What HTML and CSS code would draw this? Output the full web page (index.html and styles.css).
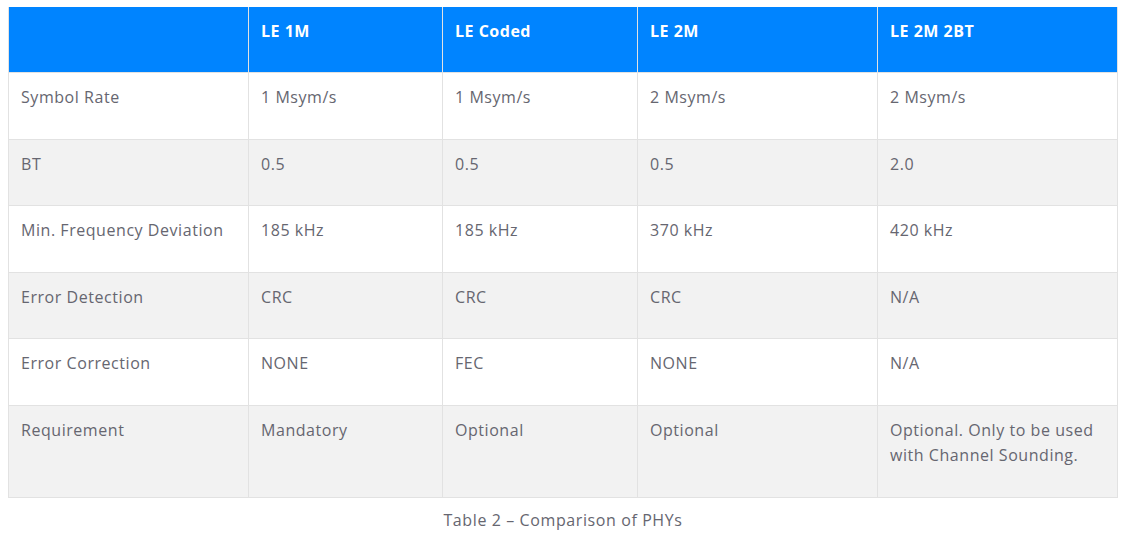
FILE: index.html
```html
<!DOCTYPE html>
<html>
<head>
<meta charset="utf-8">
<link rel="stylesheet" href="styles.css">
</head>
<body>
<figure class="phy-figure">
<table class="phy-table">
<colgroup>
<col class="c-wide"><col class="c-mid"><col class="c-mid2"><col class="c-wide"><col class="c-wide">
</colgroup>
<thead>
<tr><th></th><th>LE 1M</th><th>LE Coded</th><th>LE 2M</th><th>LE 2M 2BT</th></tr>
</thead>
<tbody>
<tr><td>Symbol Rate</td><td>1 Msym/s</td><td>1 Msym/s</td><td>2 Msym/s</td><td>2 Msym/s</td></tr>
<tr class="alt"><td>BT</td><td>0.5</td><td>0.5</td><td>0.5</td><td>2.0</td></tr>
<tr><td>Min. Frequency Deviation</td><td>185 kHz</td><td>185 kHz</td><td>370 kHz</td><td>420 kHz</td></tr>
<tr class="alt"><td>Error Detection</td><td>CRC</td><td>CRC</td><td>CRC</td><td>N/A</td></tr>
<tr><td>Error Correction</td><td>NONE</td><td>FEC</td><td>NONE</td><td>N/A</td></tr>
<tr class="alt"><td>Requirement</td><td>Mandatory</td><td>Optional</td><td>Optional</td><td>Optional. Only to be used with Channel Sounding.</td></tr>
</tbody>
</table>
<figcaption class="phy-caption">Table 2 – Comparison of PHYs</figcaption>
</figure>
</body>
</html>
```
FILE: styles.css
```css
html, body {
  margin: 0;
  padding: 0;
  background: #ffffff;
}
body {
  font-family: "Open Sans", "Liberation Sans", sans-serif;
  color: #666670;
}
.phy-figure {
  margin: 0;
  padding: 7px 13px 0 8px;
}
.phy-table {
  width: 1110px;
  border-collapse: collapse;
  table-layout: fixed;
  font-size: 16px;
  line-height: 25.4px;
  letter-spacing: 0.55px;
}
.c-wide { width: 240px; }
.c-mid { width: 194px; }
.c-mid2 { width: 195px; }
.phy-table th,
.phy-table td {
  border: 1px solid #e2e2e2;
  text-align: left;
  vertical-align: top;
  padding: 12px 12px 28.2px 12px;
}
.phy-table th {
  background: #0084ff;
  color: #ffffff;
  font-weight: 700;
  border-top: none;
  padding-bottom: 27.6px;
  letter-spacing: 0.5px;
}
.phy-table td { font-weight: 400; }
.phy-table tr.alt td { background: #f2f2f2; }
.phy-caption {
  text-align: center;
  font-size: 16px;
  line-height: 20px;
  letter-spacing: 0.6px;
  margin-top: 12px;
  color: #666670;
}
```
